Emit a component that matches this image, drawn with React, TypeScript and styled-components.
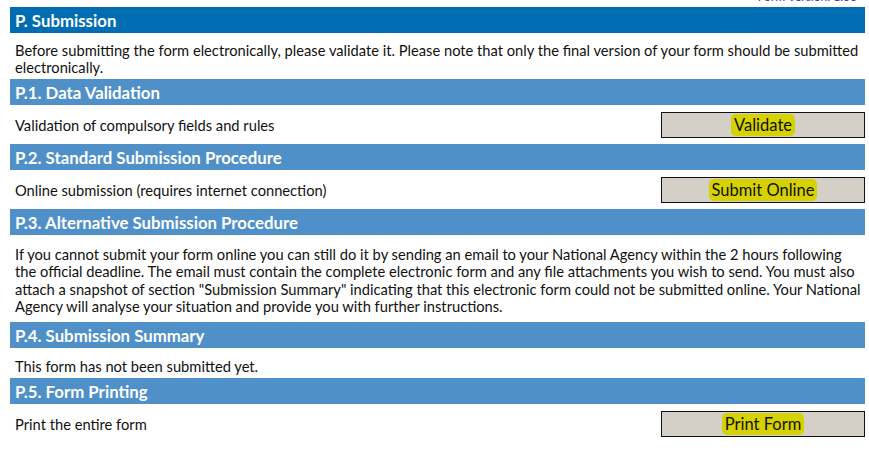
import React from "react";
import styled, { createGlobalStyle } from "styled-components";

const Global = createGlobalStyle`
  html, body { margin: 0; padding: 0; background: #ffffff; }
  body { font-family: Lato, "Noto Sans", sans-serif; color: #111111; }
  * { box-sizing: border-box; }
`;

const Page = styled.div`
  width: 869px;
  padding: 0 4px 0 10px;
  display: flex;
  flex-direction: column;
`;

const TopLine = styled.div`
  height: 7px;
  overflow: hidden;
  display: flex;
  justify-content: flex-end;
  padding-right: 8px;
`;

const VersionText = styled.span`
  font-size: 12px;
  line-height: 12px;
  margin-top: -9px;
  color: #1f3f9a;
`;

const Bar = styled.div<{ $main?: boolean }>`
  height: 26px;
  background: ${(p) => (p.$main ? "#006db2" : "#4f90c8")};
  color: #ffffff;
  font-weight: 700;
  font-size: 16.8px;
  display: flex;
  align-items: center;
  padding-left: 5px;
`;

const Para = styled.div<{ $h: number; $top: number }>`
  height: ${(p) => p.$h}px;
  font-size: 14.7px;
  line-height: 17.4px;
  padding: ${(p) => p.$top}px 5px 0 5px;
  white-space: nowrap;
`;

const Row = styled.div<{ $h: number; $top?: number }>`
  height: ${(p) => p.$h}px;
  display: flex;
  align-items: center;
  justify-content: space-between;
  padding: ${(p) => p.$top ?? 0}px 0 0 5px;
  font-size: 14.7px;
`;

const Button = styled.div`
  width: 204px;
  height: 26px;
  border: 1px solid #111;
  background: #d4d0c8;
  display: flex;
  align-items: center;
  justify-content: center;
  font-size: 16.5px;
  color: #111;
`;

const Mark = styled.span`
  background: #d6d200;
  border-radius: 5px;
  padding: 0 3px;
  line-height: 22px;
`;

export default function App() {
  return (
    <>
      <Global />
      <Page>
        <TopLine>
          <VersionText>Form Version: 1.00</VersionText>
        </TopLine>
        <Bar $main>P. Submission</Bar>
        <Para $h={48 - 2} $top={9}>
          Before submitting the form electronically, please validate it. Please note that only the final version of your form should be submitted
          <br />
          electronically.
        </Para>
        <Bar>P.1. Data Validation</Bar>
        <Row $h={39}>
          <span>Validation of compulsory fields and rules</span>
          <Button>
            <Mark>Validate</Mark>
          </Button>
        </Row>
        <Bar>P.2. Standard Submission Procedure</Bar>
        <Row $h={39}>
          <span>Online submission (requires internet connection)</span>
          <Button>
            <Mark>Submit Online</Mark>
          </Button>
        </Row>
        <Bar>P.3. Alternative Submission Procedure</Bar>
        <Para $h={87} $top={11}>
          If you cannot submit your form online you can still do it by sending an email to your National Agency within the 2 hours following
          <br />
          the official deadline. The email must contain the complete electronic form and any file attachments you wish to send. You must also
          <br />
          attach a snapshot of section "Submission Summary" indicating that this electronic form could not be submitted online. Your National
          <br />
          Agency will analyse your situation and provide you with further instructions.
        </Para>
        <Bar>P.4. Submission Summary</Bar>
        <Row $h={30} $top={6}>
          <span>This form has not been submitted yet.</span>
        </Row>
        <Bar>P.5. Form Printing</Bar>
        <Row $h={39}>
          <span>Print the entire form</span>
          <Button>
            <Mark>Print Form</Mark>
          </Button>
        </Row>
      </Page>
    </>
  );
}
